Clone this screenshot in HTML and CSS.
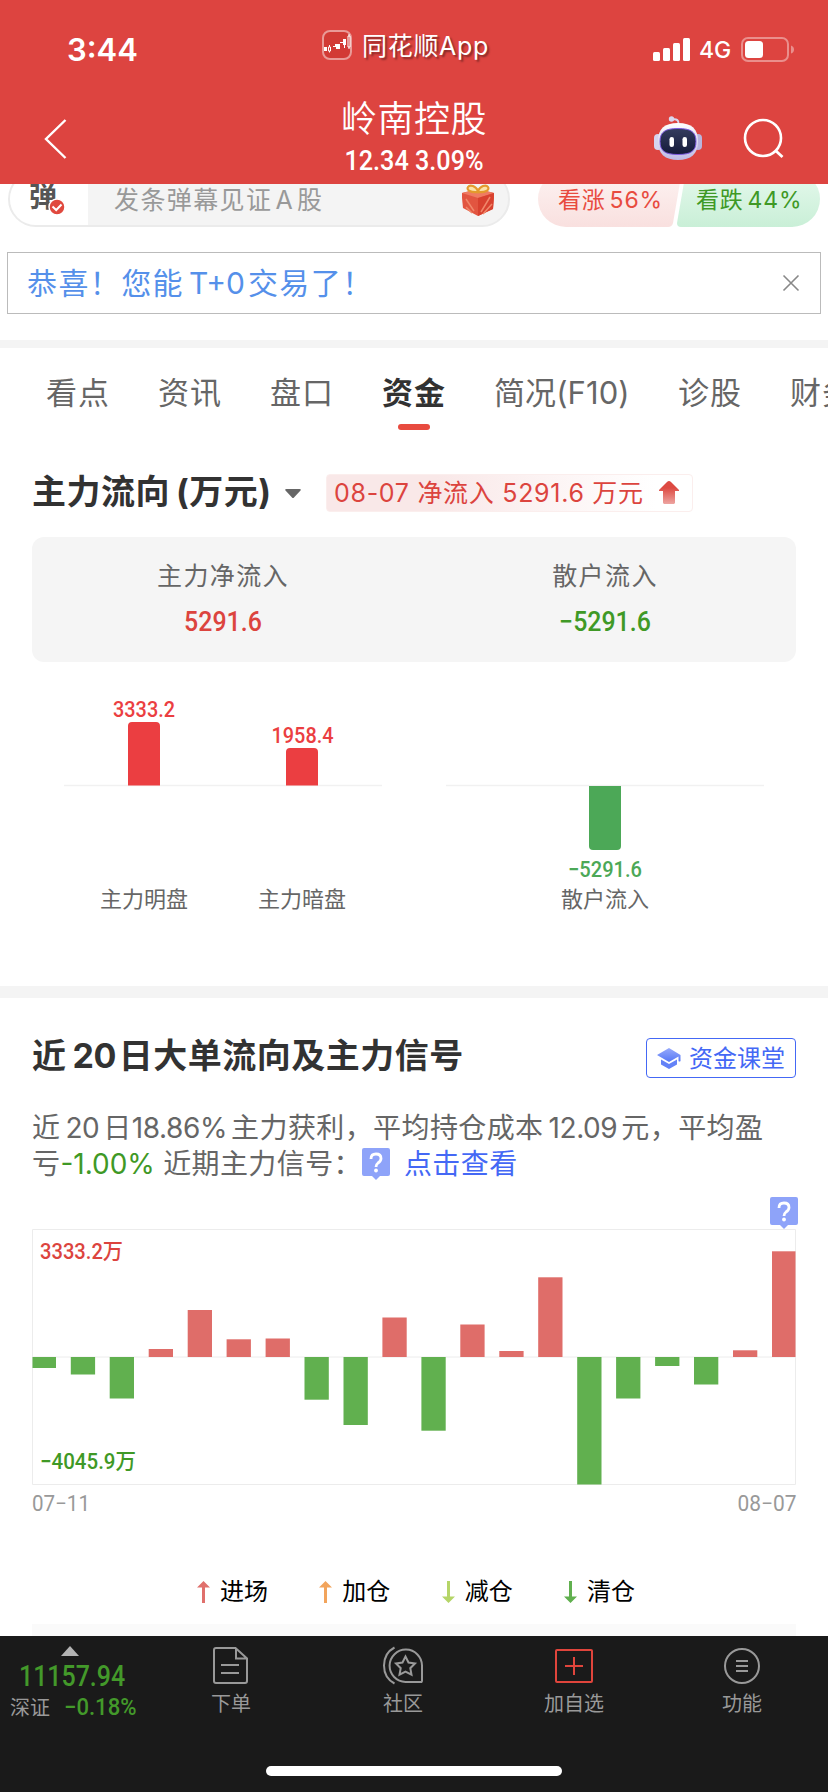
FILE: index.html
```
<!doctype html>
<html lang="zh-CN">
<head>
  <meta charset="utf-8">
  <meta name="viewport" content="width=device-width, initial-scale=1">
  <title>岭南控股 12.34 3.09%</title>
  <link rel="stylesheet" href="styles.css">
</head>
<body>
<header class="header">
  <div class="status-bar">
    <div class="time">3:44</div>
    <div class="app-name">
      <svg width="30" height="30" viewBox="0 0 30 30">
        <rect x="1" y="1" width="28" height="28" rx="7" fill="#d23a35" stroke="#e99a97" stroke-width="2"/>
        <path d="M2 17h3v4H2zM11 16h3v1h-3zM13 14h5v5h-4v-2h-1zM21 9h3v6h-3zM18 12h3v1h-3z" fill="#fff"/>
        <path d="M6.500 17h2v4h-2zM26 6h2v11h-2zM7.500 15v2M7.500 21v1.500M27 4v2M27 17v2M22.500 15v3" fill="none" stroke="#fff"/>
      </svg>
      <span>同花顺App</span>
    </div>
    <div class="signal">
      <svg width="38" height="24" viewBox="0 0 38 24" fill="#fff">
        <rect x="0" y="14" width="7" height="9" rx="1.500"/>
        <rect x="10" y="10" width="7" height="13" rx="1.500"/>
        <rect x="20" y="5" width="7" height="18" rx="1.500"/>
        <rect x="30" y="0" width="7" height="23" rx="1.500"/>
      </svg>
      <span class="network">4G</span>
      <svg width="54" height="25" viewBox="0 0 54 25">
        <rect x="1" y="1" width="46" height="23" rx="6" fill="none" stroke="#ea8f8c" stroke-width="2"/>
        <rect x="4" y="4" width="18" height="17" rx="3.500" fill="#fff"/>
        <path d="M50 8.500q3 1 3 4t-3 4z" fill="#ea8f8c"/>
      </svg>
    </div>
  </div>
  <div class="nav-bar">
    <svg class="back" width="24" height="42" viewBox="0 0 24 42">
      <path d="M21.500 2 2 21l19.500 19" fill="none" stroke="#fff" stroke-width="2.400"/>
    </svg>
    <div class="stock">
      <h1>岭南控股</h1>
      <div class="price num">12.34 3.09%</div>
    </div>
    <div class="nav-icons">
      <svg width="48" height="46" viewBox="0 0 48 46">
        <defs>
          <linearGradient id="shell" x1="0" y1="0" x2="0" y2="1">
            <stop offset="0" stop-color="#fff"/>
            <stop offset="1" stop-color="#bdb9e4"/>
          </linearGradient>
          <linearGradient id="visor" x1="0" y1="0" x2="0" y2="1">
            <stop offset="0" stop-color="#343c5e"/>
            <stop offset="1" stop-color="#151a3a"/>
          </linearGradient>
        </defs>
        <path d="M18 4.500c5-1 7 1 6.500 5" fill="none" stroke="#d9d6ee" stroke-width="2"/>
        <circle cx="17.500" cy="4" r="2.700" fill="#d9d6ee"/>
        <rect x="0" y="19" width="8" height="16" rx="4" fill="#d6d3ef"/>
        <rect x="40" y="19" width="8" height="16" rx="4" fill="#b9b5dd"/>
        <path d="M24 8c14 0 20 6 20 18.500S37 45 24 45 4 39 4 26.500 10 8 24 8z" fill="url(#shell)"/>
        <path d="M24 13.500c13 0 18 3.500 18 13s-5 13-18 13-18-3.500-18-13 5-13 18-13z" fill="url(#visor)" stroke="#7d5ae0"/>
        <rect x="15.500" y="22" width="4.500" height="10" rx="2.200" fill="#fff"/>
        <rect x="28.500" y="22" width="4.500" height="10" rx="2.200" fill="#fff"/>
      </svg>
      <svg width="42" height="42" viewBox="0 0 42 42">
        <circle cx="20" cy="20" r="18" fill="none" stroke="#fff" stroke-width="2.600"/>
        <path d="m33 33 6.500 6" stroke="#fff" stroke-width="2.800"/>
      </svg>
    </div>
  </div>
</header>

<div class="barrage-row">
  <div class="barrage">
    <div class="barrage-switch">弹
      <svg class="checked" width="18" height="18" viewBox="0 0 18 18">
        <circle cx="9" cy="9" r="8" fill="#e0493e" stroke="#fff" stroke-width="1.500"/>
        <path d="m4.500 8.500 3.700 3.500 5.300-5.500" fill="none" stroke="#fff" stroke-width="2"/>
      </svg>
    </div>
    <div class="barrage-input">发条弹幕见证<span class="latin">A</span>股</div>
    <svg class="gift" width="34" height="42" viewBox="0 0 34 42">
      <path d="m1 17 16-4 16 4v5l-1 11-15 7-15-8-1-10z" fill="#e25540"/>
      <path d="m1 17 16-4 16 4-16 5z" fill="#ef7b62"/>
      <path d="M17 22v18l15-7 1-16z" fill="#d8412f"/>
      <path d="m5 23 8 12M5 31l6 6M29 21l-9 15M31 28l-9 10" stroke="#f0876a" stroke-width="1.500"/>
      <path d="M17 16c-7 1-12-2-10-5s8-1 10 4c2-5 8-7 10-4s-3 6-10 5z" fill="#fbe3a8" stroke="#e39a2e" stroke-width="2.200"/>
    </svg>
  </div>
  <div class="vote">
    <svg width="282" height="56" viewBox="0 0 282 56">
      <defs>
        <linearGradient id="up" x1="0" y1="0" x2="0" y2="1">
          <stop offset="0" stop-color="#fdf3f2"/>
          <stop offset="1" stop-color="#f9e0df"/>
        </linearGradient>
        <linearGradient id="down" x1="0" y1="0" x2="0" y2="1">
          <stop offset="0" stop-color="#e6f9ed"/>
          <stop offset="1" stop-color="#c9efd7"/>
        </linearGradient>
      </defs>
      <path d="M28 0h116l-9 52q-1 4-5 4H28a28 28 0 0 1 0-56z" fill="url(#up)"/>
      <path d="M148 0h106a28 28 0 0 1 0 56H143q-4 0-4-4z" fill="url(#down)"/>
    </svg>
    <div class="vote-text">
      <span class="red">看涨<i>56%</i></span>
      <span class="green">看跌<i>44%</i></span>
    </div>
  </div>
</div>

<div class="notice">
  <span>恭喜！您能<i>T+0</i>交易了！</span>
  <svg width="18" height="18" viewBox="0 0 18 18">
    <path d="m1.500 1.500 15 15m0-15-15 15" stroke="#888" stroke-width="1.600"/>
  </svg>
</div>

<nav class="tabs">
  <span>看点</span>
  <span>资讯</span>
  <span>盘口</span>
  <span class="active">资金</span>
  <span class="f10">简况(F10)</span>
  <span>诊股</span>
  <span>财务</span>
</nav>

<section class="flow">
  <div class="flow-head">
    <h2>主力流向<span class="unit">(</span>万元)</h2>
    <svg class="caret" width="16" height="10" viewBox="0 0 16 10">
      <path d="M1.500 0h13q2 0 1 1.500L9 8.500q-1 1-2 0L.5 1.500Q-.5 0 1.500 0z" fill="#666"/>
    </svg>
    <div class="flow-tag">
      <span>08-07 净流入 5291.6 万元</span>
      <svg width="20" height="23" viewBox="0 0 20 23">
        <defs>
          <linearGradient id="arrow" x1="0" y1="0" x2="0" y2="1">
            <stop offset=".3" stop-color="#dd4a42"/>
            <stop offset="1" stop-color="#eda5a1"/>
          </linearGradient>
        </defs>
        <path d="M10 0q1 0 2 1l8 8v1h-4v12l-1 1H5l-1-1V10H0V9l8-8q1-1 2-1z" fill="url(#arrow)"/>
      </svg>
    </div>
  </div>

  <div class="summary">
    <div>
      <div class="summary-label">主力净流入</div>
      <div class="summary-value num red">5291.6</div>
    </div>
    <div>
      <div class="summary-label">散户流入</div>
      <div class="summary-value num green">−5291.6</div>
    </div>
  </div>

  <svg class="flow-chart" width="764" height="240" viewBox="32 690 764 240">
    <path d="M64 785.500h318M446 785.500h318" stroke="#f1f1f1" stroke-width="1.500"/>
    <path d="M128 785.500v-59.500q0-4 4-4h24q4 0 4 4v59.500zM286 785.500v-33.500q0-4 4-4h24q4 0 4 4v33.500z" fill="#eb3e41"/>
    <path d="M589 786v60q0 4 4 4h24q4 0 4-4v-60z" fill="#4ca857"/>
    <g class="num" text-anchor="middle">
      <text x="144" y="716.500" textLength="62" lengthAdjust="spacingAndGlyphs" fill="#eb3e41">3333.2</text>
      <text x="302.500" y="742.500" textLength="62" lengthAdjust="spacingAndGlyphs" fill="#eb3e41">1958.4</text>
      <text x="605" y="876.500" textLength="74" lengthAdjust="spacingAndGlyphs" fill="#4ca857">−5291.6</text>
    </g>
    <g class="axis" text-anchor="middle">
      <text x="144" y="907">主力明盘</text>
      <text x="302" y="907">主力暗盘</text>
      <text x="605" y="907">散户流入</text>
    </g>
  </svg>
</section>

<section class="signal-section">
  <div class="signal-head">
    <h2>近<i>20</i>日大单流向及主力信号</h2>
    <div class="lesson">
      <svg width="25" height="21" viewBox="0 0 25 21">
        <defs>
          <linearGradient id="cap" x1="0" y1="0" x2="0" y2="1">
            <stop offset="0" stop-color="#97aafb"/>
            <stop offset="1" stop-color="#5577f6"/>
          </linearGradient>
        </defs>
        <path d="M12 0 0 7l12 7 9.500-5.500V13q1 1 2 0V7z" fill="url(#cap)"/>
        <path d="M4 11.500v5l8 4.500 8-4.500v-5L12 16z" fill="#6482f7"/>
      </svg>
      <span>资金课堂</span>
    </div>
  </div>
  <p class="intro">
    近<i>20</i>日<i class="rate">18.86%</i>主力获利，平均持仓成本<i>12.09</i>元，平均盈<br>
    亏<em class="green">-1.00%</em> 近期主力信号：<svg class="help" width="28" height="32" viewBox="0 0 28 32">
      <path d="M2 0h24q2 0 2 2v24q0 2-2 2h-8l-4 4-4-4H2q-2 0-2-2V2q0-2 2-2z" fill="#8ea3f9"/>
      <path d="M9 11q0-5 5-5t5 4.500q0 2.500-3 4.500-2 1.500-2 4" fill="none" stroke="#fff" stroke-width="2.800"/>
      <circle cx="14" cy="22.500" r="1.900" fill="#fff"/>
    </svg><a class="link">点击查看</a>
  </p>

  <svg class="big-chart" width="768" height="328" viewBox="32 1196 768 328">
    <path d="M32.500 1229.500h763v255h-763zM32.500 1357h763" fill="none" stroke="#ececec"/>
    <g fill="#df6d69">
      <rect x="148.700" y="1349" width="24.300" height="8"/>
      <rect x="187.700" y="1310" width="24.300" height="47"/>
      <rect x="226.600" y="1339.300" width="24.300" height="17.700"/>
      <rect x="265.600" y="1338.500" width="24.300" height="18.500"/>
      <rect x="382.400" y="1317.500" width="24.300" height="39.500"/>
      <rect x="460.300" y="1324.500" width="24.300" height="32.500"/>
      <rect x="499.300" y="1351" width="24.300" height="6"/>
      <rect x="538.200" y="1277.300" width="24.300" height="79.700"/>
      <rect x="733" y="1350.300" width="24.300" height="6.700"/>
      <rect x="772" y="1251.300" width="23.500" height="105.700"/>
    </g>
    <g fill="#61b04f">
      <rect x="32.500" y="1357" width="23.500" height="11"/>
      <rect x="70.800" y="1357" width="24.300" height="17.500"/>
      <rect x="109.700" y="1357" width="24.300" height="41.500"/>
      <rect x="304.500" y="1357" width="24.300" height="42.700"/>
      <rect x="343.500" y="1357" width="24.300" height="68"/>
      <rect x="421.400" y="1357" width="24.300" height="73.700"/>
      <rect x="577.200" y="1357" width="24.300" height="127.500"/>
      <rect x="616.100" y="1357" width="24.300" height="41.500"/>
      <rect x="655.100" y="1357" width="24.300" height="9"/>
      <rect x="694" y="1357" width="24.300" height="27.500"/>
    </g>
    <g class="num">
      <text x="40" y="1259" textLength="83" lengthAdjust="spacingAndGlyphs" fill="#dc443e">3333.2万</text>
      <text x="40" y="1469" textLength="96" lengthAdjust="spacingAndGlyphs" fill="#3f9926">−4045.9万</text>
    </g>
    <g class="date">
      <text x="32" y="1511" textLength="58" lengthAdjust="spacingAndGlyphs">07−11</text>
      <text x="737.500" y="1511" textLength="59" lengthAdjust="spacingAndGlyphs">08−07</text>
    </g>
    <g transform="translate(770 1197)">
      <path d="M2 0h24q2 0 2 2v24q0 2-2 2h-8l-4 4-4-4H2q-2 0-2-2V2q0-2 2-2z" fill="#8ea3f9"/>
      <path d="M9 11q0-5 5-5t5 4.500q0 2.500-3 4.500-2 1.500-2 4" fill="none" stroke="#fff" stroke-width="2.800"/>
      <circle cx="14" cy="22.500" r="1.900" fill="#fff"/>
    </g>
  </svg>

  <div class="legend">
    <span class="enter"><svg width="13" height="22" viewBox="0 0 13 22"><path d="m6.500 0 6.500 6.500H8V22H5V6.500H0z"/></svg>进场</span>
    <span class="add"><svg width="13" height="22" viewBox="0 0 13 22"><path d="m6.500 0 6.500 6.500H8V22H5V6.500H0z"/></svg>加仓</span>
    <span class="reduce"><svg width="13" height="22" viewBox="0 0 13 22"><path d="M6.500 22 0 15.500h5V0h3v15.500h5z"/></svg>减仓</span>
    <span class="clear"><svg width="13" height="22" viewBox="0 0 13 22"><path d="M6.500 22 0 15.500h5V0h3v15.500h5z"/></svg>清仓</span>
  </div>
  <div class="next-card"></div>
</section>

<footer class="footer">
  <div class="index">
    <svg width="18" height="10" viewBox="0 0 18 10"><path d="m9 0 9 10H0z" fill="#b3b3b3"/></svg>
    <div class="index-value num">11157.94</div>
    <div class="index-change"><span>深证</span><span class="num">−0.18%</span></div>
  </div>
  <div class="tools">
    <div class="tool">
      <svg width="40" height="40" viewBox="0 0 40 40" fill="none" stroke="#999" stroke-width="2">
        <path d="M25.500 2H6q-2 0-2 2v31q0 2 2 2h29q2 0 2-2V12.500zM26 2v10.500h11M11 19h18M11 27h18" transform="translate(-1)"/>
      </svg>
      <span>下单</span>
    </div>
    <div class="tool">
      <svg width="40" height="40" viewBox="0 0 40 40" fill="none" stroke="#999" stroke-width="2">
        <path d="M11.500 1.500C-2.500 9-2.500 30 11.500 37.500M39 36H22.500A16.200 16.200 0 1 1 39 20v15q0 1-1 1z"/>
        <path d="m22.500 10.500 3 6 6.500 1-4.700 4.700 1.200 6.500-6-3.100-6 3.100 1.200-6.500-4.700-4.700 6.500-1z"/>
      </svg>
      <span>社区</span>
    </div>
    <div class="tool">
      <svg width="40" height="40" viewBox="0 0 40 40" fill="none" stroke="#e0453c" stroke-width="2">
        <rect x="2" y="4" width="36" height="32" rx="1"/>
        <path d="M20 11v18M11 20h18"/>
      </svg>
      <span>加自选</span>
    </div>
    <div class="tool">
      <svg width="40" height="40" viewBox="0 0 40 40" fill="none" stroke="#999" stroke-width="2">
        <circle cx="20" cy="20" r="17"/>
        <path d="M14 15h12M14 20h12M14 25h12"/>
      </svg>
      <span>功能</span>
    </div>
  </div>
  <div class="home-bar"></div>
</footer>
</body>
</html>
```
FILE: styles.css
```
* {
  box-sizing: border-box;
}

body {
  margin: 0;
  width: 828px;
  height: 1792px;
  overflow: hidden;
  background-color: #fff;
  color: #666;
  font-family: Inter, "Noto Sans CJK SC", sans-serif;
}

h1,
h2,
p {
  margin: 0;
}

i,
em {
  font-style: normal;
}

svg {
  display: block;
  flex: none;
}

.num {
  font-family: Roboto, "Noto Sans CJK SC", sans-serif;
  font-weight: 500;
}

.red {
  color: #dc443e;
}

.green {
  color: #3f9926;
}

/* header */
.header {
  position: relative;
  z-index: 1;
  height: 184px;
  background-color: #dd4440;
  color: #fff;
}

.status-bar {
  display: grid;
  grid-template-columns: 322px 1fr 175px;
  height: 92px;
}

.time {
  padding: 30px 0 0 67px;
  font-size: 31px;
  line-height: 40px;
  font-weight: 600;
}

.app-name {
  display: flex;
  gap: 10px;
  padding-top: 30px;
  font-size: 25px;
  line-height: 32px;
  letter-spacing: 0.7px;
  text-shadow: 2px 2px 2px rgba(0, 0, 0, 0.4);
}

.signal {
  display: flex;
  padding-top: 38px;
}

.network {
  width: 42px;
  margin-left: 8px;
  font-size: 23px;
  line-height: 25px;
  font-weight: 500;
}

.signal svg:last-child {
  margin-top: -1px;
}

.nav-bar {
  display: grid;
  grid-template-columns: 200px 1fr 200px;
  height: 92px;
}

.back {
  margin: 26px 0 0 44px;
}

.stock {
  text-align: center;
}

.stock h1 {
  font-size: 36px;
  line-height: 54px;
  font-weight: 350;
  letter-spacing: 0.5px;
}

.price {
  font-size: 28px;
  line-height: 29px;
  transform: scaleX(0.9);
}

.nav-icons {
  display: flex;
  gap: 41px;
  padding: 23px 0 0 26px;
}

.nav-icons svg:last-child {
  margin-top: 3px;
}

/* barrage input + vote, half scrolled under the header */
.barrage-row {
  display: flex;
  justify-content: space-between;
  height: 56px;
  margin: -13px 8px 0;
}

.barrage {
  display: flex;
  width: 502px;
  border: 2px solid #ebebeb;
  border-radius: 28px;
  overflow: hidden;
  background-color: #f4f4f4;
}

.barrage-switch {
  position: relative;
  width: 78px;
  padding-left: 19px;
  background-color: #fff;
  color: #555;
  font-size: 28px;
  line-height: 48px;
  font-weight: 700;
}

.checked {
  position: absolute;
  left: 38px;
  top: 25px;
}

.barrage-input {
  width: 373px;
  padding-left: 26px;
  color: #999;
  font-size: 25px;
  line-height: 54px;
  letter-spacing: 1.4px;
}

.latin {
  margin: 0 3px;
}

.gift {
  margin-top: 3px;
}

.vote {
  position: relative;
}

.vote-text {
  position: absolute;
  inset: 0;
  display: flex;
  gap: 36px;
  padding-left: 20px;
  font-size: 23px;
  line-height: 58px;
}

.vote-text span {
  width: 102px;
  white-space: nowrap;
  letter-spacing: 0.8px;
}

.vote-text i {
  margin-left: 4px;
}

.vote .red {
  color: #e84b3f;
}

/* notice */
.notice {
  display: flex;
  justify-content: space-between;
  align-items: center;
  height: 62px;
  margin: 25px 7px 26px;
  padding: 0 20px 0 19px;
  border: 1px solid #bbb;
  color: #5590ea;
  font-size: 30px;
  letter-spacing: 1.4px;
}

.notice span {
  padding-bottom: 4px;
}

.notice i {
  margin: 0 3px 0 5px;
  letter-spacing: 0;
}

/* tabs */
.tabs {
  display: flex;
  gap: 48px;
  height: 98px;
  padding: 21px 0 0 46px;
  border-top: 8px solid #f4f4f4;
  overflow: hidden;
  font-size: 31px;
  line-height: 48px;
  letter-spacing: 0.9px;
  white-space: nowrap;
}

.tabs span {
  flex: none;
  width: 64px;
}

.tabs .f10 {
  width: 136px;
  letter-spacing: 0.1px;
}

.tabs .active {
  color: #323232;
  font-weight: 700;
}

.tabs .active::after {
  content: "";
  display: block;
  width: 32px;
  height: 6px;
  margin: 7px auto 0;
  border-radius: 3px;
  background-color: #e84b3f;
}

/* main flow */
.flow {
  height: 560px;
  padding: 36px 32px 0;
  border-bottom: 12px solid #f4f4f4;
}

h2 {
  color: #323232;
  font-size: 34px;
  line-height: 36px;
  font-weight: 700;
  letter-spacing: 0.5px;
  white-space: nowrap;
}

.flow-head {
  display: flex;
  height: 63px;
}

.flow-head h2 {
  width: 253px;
}

.unit {
  margin-left: 6px;
}

.caret {
  margin-top: 15px;
}

.flow-tag {
  display: flex;
  width: 367px;
  height: 38px;
  margin-left: 25px;
  padding: 6px 0 0 7px;
  border: 1px solid #fbeeed;
  border-radius: 4px;
  background: linear-gradient(90deg, #f9e8e8 30%, #fff 90%);
  color: #dc443e;
  font-size: 25px;
  line-height: 25px;
  letter-spacing: 0.7px;
  white-space: nowrap;
}

.flow-tag span {
  width: 325px;
}

.summary {
  display: grid;
  grid-template-columns: 1fr 1fr;
  height: 125px;
  padding-top: 20px;
  border-radius: 12px;
  background-color: #f5f5f5;
  text-align: center;
}

.summary-label {
  font-size: 25px;
  line-height: 39px;
  letter-spacing: 1.4px;
}

.summary-value {
  font-size: 28px;
  line-height: 52px;
  transform: scaleX(0.89);
}

.flow-chart {
  margin-top: 28px;
}

.flow-chart .num,
.big-chart .num {
  font-size: 22px;
}

.axis {
  fill: #666;
  font-size: 22px;
}

/* 20 day signals */
.signal-section {
  height: 638px;
  padding: 40px 32px 0;
}

.signal-head {
  display: flex;
  justify-content: space-between;
  height: 48px;
}

.signal-head h2 i {
  margin: 0 3px 0 6px;
  letter-spacing: -0.5px;
}

.lesson {
  display: flex;
  gap: 7px;
  width: 150px;
  height: 40px;
  padding: 9px 0 0 10px;
  border: 1px solid #4468f5;
  border-radius: 4px;
  color: #4468f5;
  font-size: 24px;
  line-height: 21px;
  white-space: nowrap;
}

.intro {
  height: 72px;
  margin-top: 24px;
  font-size: 28px;
  line-height: 36px;
  letter-spacing: 0.4px;
  white-space: nowrap;
}

.intro i {
  margin: 0 4px 0 5px;
  letter-spacing: -0.4px;
}

.intro .rate {
  margin: 0 4px 0 0;
}

.intro em {
  letter-spacing: 0;
}

.help {
  display: inline-block;
  margin: 0 14px 0 0;
  vertical-align: -6px;
}

.link {
  color: #4468f5;
}

.big-chart {
  margin-top: 14px;
}

.date {
  fill: #999;
  font-family: Roboto, sans-serif;
  font-size: 22px;
}

.legend {
  display: flex;
  justify-content: space-between;
  width: 438px;
  margin: 51px 0 0 165px;
  color: #000;
  font-size: 24px;
  line-height: 34px;
}

.legend span {
  display: flex;
  align-items: center;
  gap: 10px;
}

.enter svg {
  fill: #e0706c;
}

.add svg {
  fill: #f2a45c;
}

.reduce svg {
  fill: #b5d568;
}

.clear svg {
  fill: #61b04f;
}

.next-card {
  height: 12px;
  margin-top: 15px;
  background-color: #fafafa;
}

/* footer */
.footer {
  display: grid;
  grid-template-columns: 140px 1fr;
  grid-template-rows: 130px 26px;
  height: 156px;
  background-color: #1a1a1a;
  color: #999;
}

.index {
  padding-top: 10px;
}

.index svg {
  margin-left: 61px;
}

.index-value {
  padding: 3px 0 0 19px;
  color: #43992a;
  font-size: 29px;
  line-height: 34px;
  transform: scaleX(0.86);
  transform-origin: 19px 0;
}

.index-change {
  display: flex;
  gap: 14px;
  padding-left: 10px;
  font-size: 20px;
  line-height: 30px;
  white-space: nowrap;
}

.index-change .num {
  color: #43992a;
  font-size: 24px;
  line-height: 28px;
  transform: scaleX(0.92);
  transform-origin: 0 0;
}

.tools {
  display: grid;
  grid-template-columns: 172px 171px 168px 80px;
  padding: 10px 0 0 51px;
}

.tool {
  display: flex;
  flex-direction: column;
  align-items: center;
  width: 80px;
  font-size: 20px;
  line-height: 36px;
}

.home-bar {
  grid-column: 1 / 3;
  width: 296px;
  height: 10px;
  margin: 0 auto;
  border-radius: 5px;
  background-color: #fff;
}
```
